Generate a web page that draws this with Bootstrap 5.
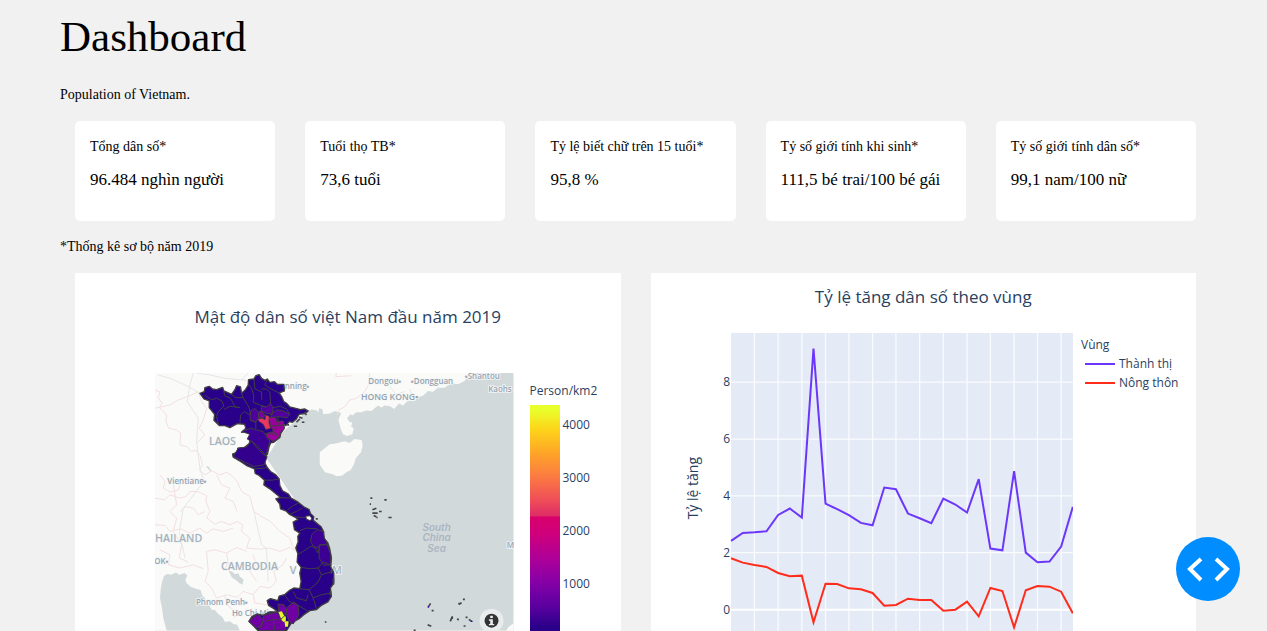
<!DOCTYPE html>
<html lang="vi">
<head>
<meta charset="utf-8">
<meta name="viewport" content="width=device-width, initial-scale=1">
<title>Dashboard</title>
<link href="https://cdn.jsdelivr.net/npm/bootstrap@5.3.0/dist/css/bootstrap.min.css" rel="stylesheet">
<style>
body{background:#f1f1f1;color:#000;font-family:"Liberation Serif",serif;font-size:14px;line-height:22px}
.page{padding:8px 56px 0 60px}
.page h1{font-size:43px;line-height:58px;margin:0 0 18px}
.intro{margin:0 0 15px}
.stat{flex:1 1 0;margin:0 15px;height:100px;padding:15px;background:#fff;border-radius:5px;min-width:0}
.stat dt{font-weight:400;margin-bottom:11px}
.stat dd{font-size:17px;white-space:nowrap;margin:0}
.note{margin:15px 0}
.panel{flex:1 1 0;min-width:0;margin:0 15px;background:#fff;color:#2a3f5f;font-family:"Open Sans",sans-serif;font-size:12px;line-height:19px}
.panel h2{font-size:17px;line-height:24px;text-align:center;margin:0}
.map-head{padding:32px 0 44px}
.line-head{padding:12px 0 24px}
.map-body{padding-left:80px}
.scale{flex:0 0 91px;margin-left:16px;padding-top:8px}
.scale-bar{width:30px;height:226px;margin-top:5px;background:linear-gradient(#e9ff2c 0,#e9ff2c 5px,#fdd51a 24px,#fea528 48px,#fb7a42 72px,#ee4c59 96px,#de2c66 111px,#d8006c 112px,#d0007b 128px,#ad0099 154px,#8400a7 178px,#5a009f 202px,#2a0089 222px)}
.ticks{padding:15px 0 0 3px;gap:34px}
.line-body{padding-left:30px}
.legend-box{flex:0 0 123px;padding:2px 0 0 8px}
.key{width:30px;height:2px;margin:0 4px}
.key-urban{background:#6c37fb}
.key-rural{background:#ff2c1c}
.chart-svg{display:block;width:100%;height:auto}
svg text{font-family:"Open Sans",sans-serif}
svg .place{font-weight:600;fill:#94a3b0;stroke:#f5f7f7;stroke-width:5px;paint-order:stroke;stroke-linejoin:round;font-size:24px}
svg .country{font-size:32px;fill:#a5b2bc}
svg .sea-name{font-family:Inter,sans-serif;font-size:30px;font-style:italic;fill:#aab5c1;stroke:none;text-anchor:middle}
.debug{width:64px;height:64px;right:27px;bottom:30px;background:#008dff}
</style>
</head>
<body class="vh-100 overflow-hidden">
<main class="page">
<h1 class="fw-normal">Dashboard</h1>
<p class="intro">Population of Vietnam.</p>
<div class="d-flex">
<dl class="stat mb-0"><dt>Tổng dân số*</dt><dd>96.484 nghìn người</dd></dl>
<dl class="stat mb-0"><dt>Tuổi thọ TB*</dt><dd>73,6 tuổi</dd></dl>
<dl class="stat mb-0"><dt>Tỷ lệ biết chữ trên 15 tuổi*</dt><dd>95,8 %</dd></dl>
<dl class="stat mb-0"><dt>Tỷ số giới tính khi sinh*</dt><dd>111,5 bé trai/100 bé gái</dd></dl>
<dl class="stat mb-0"><dt>Tỷ số giới tính dân số*</dt><dd>99,1 nam/100 nữ</dd></dl>
</div>
<p class="note">*Thống kê sơ bộ năm 2019</p>
<div class="d-flex">
<section class="panel">
<div class="map-head"><h2 class="fw-normal">Mật độ dân số việt Nam đầu năm 2019</h2></div>
<div class="map-body d-flex">
<div class="flex-grow-1">
<svg class="chart-svg" viewBox="15 24 1077 774" role="img" aria-label="Mật độ dân số">
<rect x="15" y="24" width="1077" height="774" fill="#d2d9db"/>
<!-- mainland, Hainan, Palawan -->
<g fill="#fafaf8">
<path d="M15 24H965L955 35 945 48 925 58 905 55 885 68 865 68 850 80 835 78 820 92 806 96 795 108 775 107 760 122 748 116 733 132 722 124 705 122 695 128 685 122 665 138 650 137 635 142 620 142 608 152 602 148 592 160 600 172 608 172 604 185 612 190 608 208 592 213 580 208 574 195 570 180 566 165 570 155 574 144 555 138 540 146 520 148 518 132 508 130 506 142 500 136 485 134 470 140 400 200 350 280 500 500 540 640 400 798H270L262 780 250 778 240 770 225 772 218 758 205 748 194 735 186 736 178 722 168 712 165 700 157 692 152 676 138 672 122 666 110 656 106 645 112 632 104 625 88 630 78 623 64 630 52 628 42 634 36 652 32 675 30 700 36 730 40 760 50 798H15Z"/>
<path d="M510 262 522 252 540 238 558 236 585 229 600 234 614 222 636 225 639 242 634 262 618 280 613 298 602 316 590 322 578 332 562 334 548 328 526 322 510 300Z"/>
<path d="M1070 798 1076 788 1084 782 1092 776V798Z"/>
</g>
<g fill="#d2d9db"><path d="M236 618 246 620 255 628 266 626 270 636 281 644 278 660 268 655 258 646 246 638ZM168 304 177 306 185 320 178 316Z"/></g>
<!-- borders -->
<g fill="none" stroke="#f3dfe2" stroke-width="3">
<path d="M15 75 30 82 25 98 36 115 28 128 50 150 48 170 56 190 80 195 92 205 90 240 112 246 125 260 138 255 150 272 158 300 148 315 165 330 185 318 210 330 230 322 250 335 262 350 275 380 300 395 312 440 335 455 362 470 390 500 420 520 428 545 445 555"/>
<path d="M30 330 45 350 40 370 62 382 85 375 92 355 112 350 125 340 150 345 162 355M15 400 45 405 60 390 90 400 108 395 120 380 142 380 170 392 168 410 180 440 170 460 195 478 215 470 240 480 262 470 278 480 275 500 300 520 290 550 330 553 360 550 390 560 420 548 440 560"/>
<path d="M15 480 45 482 60 500 92 492 120 505 150 490 170 505 190 492 220 500 250 490M90 440 108 425 130 430 145 450 165 440M60 440 80 460 70 500 95 540 88 580 115 592M170 560 195 555 230 565 260 548 290 560M170 560 175 620 165 650 185 670 200 700 230 690 262 698 280 680 310 690 330 665 360 670 380 650 372 620 400 600 410 580"/>
<path d="M225 692 230 720 250 735 255 760M310 690 315 715 350 720M230 565 235 595 220 620M310 570 320 600 300 620 320 650M15 130 60 120 85 105 125 90 145 80 155 110 170 130 160 165 148 190 165 210 140 235"/>
<path d="M200 330 215 360 240 370 225 400 250 410 262 440M30 555 60 570 55 600 90 610 130 600 160 612M70 360 80 420 60 440M560 24 558 35 605 32"/>
<path d="M660 24 656 60 645 80 620 100 600 105 585 125 568 135 562 150"/>
</g>
<!-- roads -->
<g fill="none" stroke="#e4e7e7" stroke-width="3">
<path d="M25 30 60 40 110 62 150 85M130 24 120 60 112 110 145 160 140 230 150 310 162 350M140 24 180 30 225 40 290 46M162 350 100 430 88 500 105 580M310 430 335 540 350 550 355 650M295 24 275 45M780 72 790 98M720 65 740 88 765 80"/>
</g>
<!-- place names under the provinces -->
<g>
<text class="place" x="391" y="72">anning▪</text>
<text class="place country" x="177" y="239">LAOS</text>
<text class="place" x="52" y="356">Vientiane▪</text>
<text class="place country" x="15" y="533">HAILAND</text>
<text class="place" x="13" y="599">OK▪</text>
<text class="place country" x="213" y="615">CAMBODIA</text>
<text class="place country" x="420" y="627">V</text><text class="place country" x="547" y="627">M</text>
<text class="place" x="138" y="722">Phnom Penh▪</text>
<text class="place" x="246" y="755">Ho Chi Minh</text>
<text class="place" x="656" y="57">Dongou▪</text>
<text class="place" x="784" y="57">▪Dongguan</text>
<text class="place" style="font-size:26px" x="634" y="104">HONG KONG▪</text>
<text class="place" x="946" y="42">▪Shantou</text>
<text class="place" x="1016" y="82">Kaohs</text>
<text class="place" x="1072" y="551">M</text>
<text class="place sea-name" x="861" y="500">South</text>
<text class="place sea-name" x="861" y="530">China</text>
<text class="place sea-name" x="861" y="561">Sea</text>
</g>
<!-- Vietnam -->
<path fill="#290089" stroke="#3f3f42" stroke-width="4" stroke-linejoin="round" d="M150 85 163 80 165 68 178 64 188 72 200 74 218 67 222 78 232 82 245 88 255 74 260 62 272 66 275 85 286 75 295 60 296 44 312 42 318 32 328 29 335 40 345 46 352 42 360 52 374 50 382 58 402 58 404 78 388 84 396 96 402 110 410 115 420 126 438 130 452 134 464 132 475 138 465 146 448 148 440 162 428 172 418 170 408 182 400 178 402 192 393 205 390 218 372 232 362 234 357 248 353 268 345 276 343 290 352 308 362 320 378 330 388 342 390 362 398 378 416 388 424 400 445 412 462 426 478 434 482 446 492 456 490 466 502 476 514 486 522 502 522 520 534 534 540 552 545 580 543 606 552 625 552 655 542 670 545 695 534 712 515 722 500 735 480 738 462 750 448 762 425 775 410 798H325L312 785 297 770 306 756 322 748 340 752 358 742 385 742 372 732 356 722 352 708 362 702 384 708 388 694 404 690 418 678 432 670 450 672 454 650 450 625 454 608 442 592 444 566 438 550 445 532 444 515 450 505 434 495 430 472 445 464 434 456 418 448 408 438 392 432 390 418 378 402 392 398 380 388 360 372 342 360 344 346 328 332 316 326 314 312 292 303 272 290 250 277 248 268 262 262 264 250 284 248 298 236 302 220 300 208 288 200 275 202 288 190 284 178 262 176 240 188 225 182 208 182 192 166 194 148 178 128 178 108 162 102Z"/>
<g stroke="#3f3f42" stroke-width="3" stroke-linejoin="round">
<path fill="#3a0093" d="M302 190 320 195 340 200 360 228 355 250 348 272 320 240 292 222 300 208 276 200Z"/>
<path fill="#32008d" d="M305 228 318 246 342 270 352 275 343 300 312 305 250 275 265 250 290 246Z"/>
<path fill="#52009d" d="M300 150 303 138 315 130 326 142 326 160 318 172 302 166ZM335 124 350 126 362 115 370 128 368 148 350 145 334 138ZM362 148 380 135 400 138 420 148 412 158 385 155 366 158Z"/>
<path fill="#7a00a5" d="M325 142 334 138 346 150 340 160 328 158Z"/>
<path fill="#9c009c" d="M358 158 376 158 382 170 400 168 404 190 392 204 388 218 370 230 352 218 348 206 372 200 362 184Z"/>
<path fill="none" d="M378 158 376 198M362 184 400 180M370 200 388 218M358 208 382 206M385 155 384 186"/>
<path fill="#e93761" stroke-width="2" d="M324 162 336 160 346 164 347 150 358 154 357 172 362 190 348 194 340 178 328 170Z"/>
<path fill="#3b0093" d="M502 494 520 500 524 520 534 540 510 540 505 565 482 530 486 510ZM508 542 532 538 543 570 542 600 522 602 508 580Z"/>
<path fill="#6f00a3" d="M384 718 402 720 412 738 408 750 388 744ZM412 728 432 712 445 722 448 750 430 778 418 770 410 748ZM297 770 322 748 342 765 335 785 320 790ZM340 752 385 742 392 765 410 772 405 798H325L342 765Z"/>
<path fill="#e4fb29" stroke="none" d="M386 742 396 740 402 752 408 756 408 768 400 772 394 764ZM404 770 416 770 416 778 414 786 406 786Z"/>
<path fill="none" d="M163 90 185 104 200 100 216 108 222 124 205 140 200 155 206 178M222 78 224 92 242 100 255 125 270 128M245 88 258 98 280 98 298 128 302 150M275 85 280 98M298 60 306 72 312 92 310 112 330 120 350 126M312 42 315 72 335 80 336 104M335 72 350 72 360 82 362 115M352 42 345 60 360 70 388 84M370 128 392 124 410 132 420 148M270 128 240 124 222 134M300 150 284 140 272 150 270 176M302 166 318 172 318 192M312 312 340 310 352 308M344 346 368 346 388 342M392 398 420 400M414 435 428 424 445 415M408 438 420 448 440 440 458 430M434 456 460 458 480 456M450 498 470 490 502 492M442 570 460 560 482 545 505 548M454 608 480 612 505 610 520 592 542 600M505 610 515 630 532 625 552 620M450 672 478 675 505 652 515 630M478 675 490 700 515 690 545 685M430 680 440 700 470 708 475 690M404 690 420 712 445 722M445 722 475 740M490 700 500 732M410 748 392 765M345 770 370 765 375 798M370 765 392 765M358 742 360 756"/>
<path fill="#fff" d="M468 454 480 453 486 460 482 468 470 463Z"/>
</g>
<!-- islands -->
<path fill="none" stroke="#46464a" stroke-width="5" d="M412 180h6M432 184h10M440 172 450 162M456 172h8M448 156l10 4M464 142l6 8M498 462h6M545 615v12M551 640v20M542 680v12M662 400h6M704 405h7M660 418h4M668 435 680 430M668 445h16M672 452l8 4M688 440h8M680 458h4M716 458h10M836 727 843 716M846 738h6M834 780 845 785M792 797h6M926 717h6M940 704h6M928 720 936 714M902 770 908 756M908 755v8M922 764h6M948 758h6M958 764 966 770M942 784h6M525 772h5"/>
<path fill="none" stroke="#3800d0" stroke-width="4" d="M834 727h4M964 770h5"/>
<!-- attribution button -->
<circle cx="1026" cy="768" r="36" fill="#e8ecec"/><circle cx="1026" cy="768" r="21" fill="#333"/>
<path fill="#e8ecec" d="M1022 753h8v7h-8zM1018 764h12v14h4v4h-16v-4h4v-10h-4z"/>
</svg>
</div>
<div class="scale">
<div>Person/km2</div>
<div class="d-flex"><div class="scale-bar"></div><div class="ticks d-flex flex-column"><span>4000</span><span>3000</span><span>2000</span><span>1000</span></div></div>
</div>
</div>
</section>
<section class="panel">
<div class="line-head"><h2 class="fw-normal">Tỷ lệ tăng dân số theo vùng</h2></div>
<div class="line-body d-flex">
<div class="flex-grow-1">
<svg class="chart-svg" viewBox="93 -381 1176 894" role="img" aria-label="Tỷ lệ tăng dân số theo vùng">
<rect x="243" y="-381" width="1025" height="894" fill="#e4eaf6"/>
<path fill="none" stroke="#fff" stroke-opacity=".8" stroke-width="4" d="M313-381V513M384-381V513M455-381V513M526-381V513M596-381V513M667-381V513M737-381V513M808-381V513M879-381V513M950-381V513M1020-381V513M1091-381V513M1161-381V513M1232-381V513M243-234H1267M243-63H1267M243 107H1267M243 277H1267"/>
<path stroke="#fff" stroke-width="6" d="M243 448H1267"/>
<g fill="#2a3f5f" font-size="36" text-anchor="end"><text x="240" y="-221">8</text><text x="240" y="-50">6</text><text x="240" y="120">4</text><text x="240" y="290">2</text><text x="240" y="461">0</text></g>
<text transform="translate(143 84) rotate(-90)" text-anchor="middle" font-size="42" fill="#2a3f5f">Tỷ lệ tăng</text>
<g fill="none" stroke-width="6">
<polyline stroke="#6c37fb" points="243,242 278,218 313,216 349,213 384,164 419,145 455,172 490,-334 526,130 561,147 596,165 632,188 667,195 702,82 737,87 773,160 808,174 843,189 879,115 915,133 950,157 985,57 1020,265 1056,270 1091,33 1126,277 1161,306 1197,304 1232,259 1267,140"/>
<polyline stroke="#ff2c1c" points="243,294 278,307 313,314 349,320 384,338 419,348 455,346 490,486 526,370 561,371 596,384 632,387 667,398 702,436 737,434 773,415 808,419 843,419 879,451 915,448 950,424 985,468 1020,383 1056,392 1091,501 1126,390 1161,377 1197,379 1232,394 1267,459"/>
</g>
</svg>
</div>
<div class="legend-box">
<div>Vùng</div>
<div class="d-flex align-items-center"><span class="key key-urban"></span>Thành thị</div>
<div class="d-flex align-items-center"><span class="key key-rural"></span>Nông thôn</div>
</div>
</div>
</section>
</div>
</main>
<button type="button" class="debug btn position-fixed rounded-circle border-0 p-0" aria-label="Debug">
<svg width="64" height="64" viewBox="0 0 64 64" fill="none" stroke="#fff" stroke-width="4"><path d="M25 22 14 32 25 43M40 22 51 32 40 43"/></svg>
</button>
<script src="https://cdn.jsdelivr.net/npm/bootstrap@5.3.0/dist/js/bootstrap.bundle.min.js"></script>
</body>
</html>
